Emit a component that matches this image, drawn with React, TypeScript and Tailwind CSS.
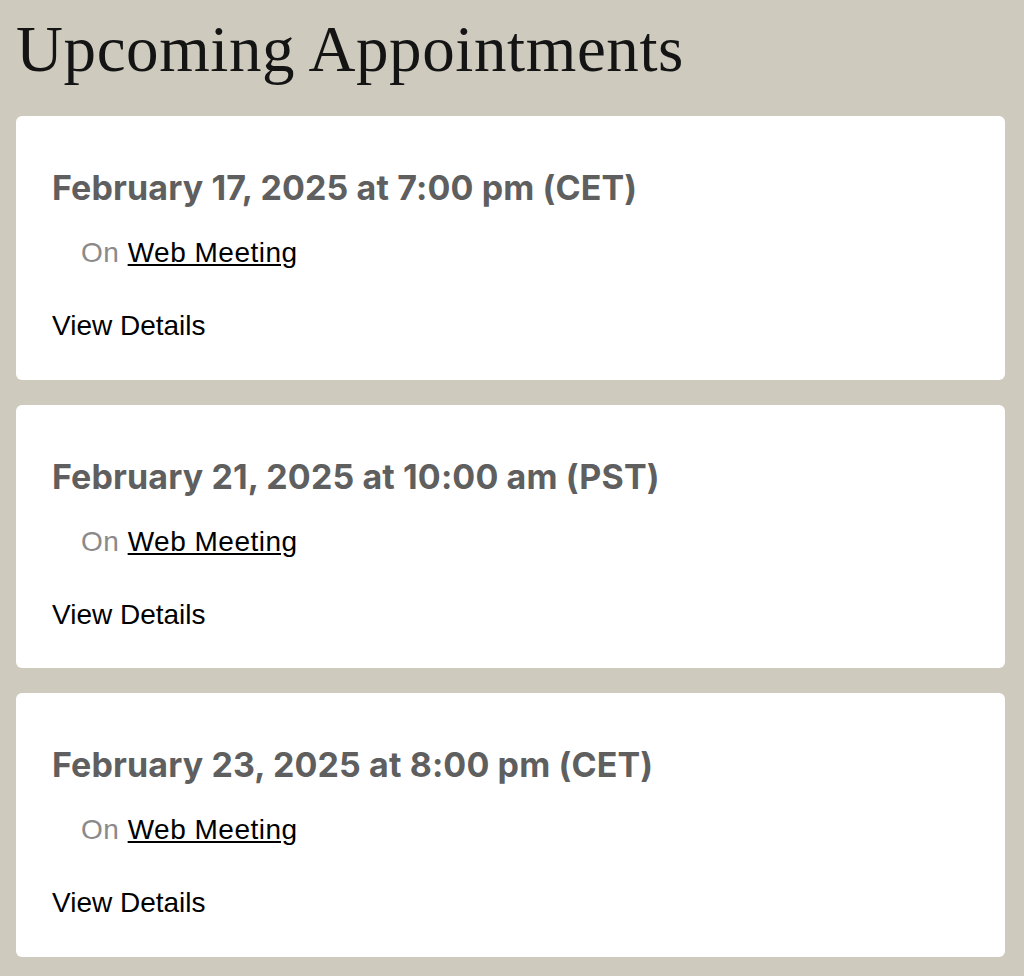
import React from "react";

const items = [
  "February 17, 2025 at 7:00 pm (CET)",
  "February 21, 2025 at 10:00 am (PST)",
  "February 23, 2025 at 8:00 pm (CET)",
];

export default function App() {
  return (
    <div className="min-h-[976px] w-[1024px] bg-[#cecabe] pt-[13px] pb-[20px]">
      <h1
        className="ml-4 text-[65px] leading-[72px] tracking-[0.6px] text-[#141414]"
        style={{ fontFamily: '"Liberation Serif", serif' }}
      >
        Upcoming Appointments
      </h1>
      <div className="mt-[31px] ml-4 flex w-[989px] flex-col gap-[25px]">
        {items.map((t) => (
          <div key={t} className="h-[263.5px] rounded-[6px] bg-white pl-[36px] pt-[52px]">
            <div
              className="text-[34px] font-bold leading-[40px] tracking-[0.12px] text-[#5f5f5f]"
              style={{ fontFamily: "Inter, sans-serif" }}
            >
              {t}
            </div>
            <div
              className="mt-[29px] pl-[29px] text-[28px] leading-[32px] tracking-[0.5px]"
              style={{ fontFamily: '"Liberation Sans", Arial, sans-serif' }}
            >
              <span className="text-[#8a8a8a]">On </span>
              <a className="text-black underline">Web Meeting</a>
            </div>
            <div
              className="mt-[41px] text-[28px] leading-[32px] text-black"
              style={{ fontFamily: '"Liberation Sans", Arial, sans-serif' }}
            >
              View Details
            </div>
          </div>
        ))}
      </div>
    </div>
  );
}
